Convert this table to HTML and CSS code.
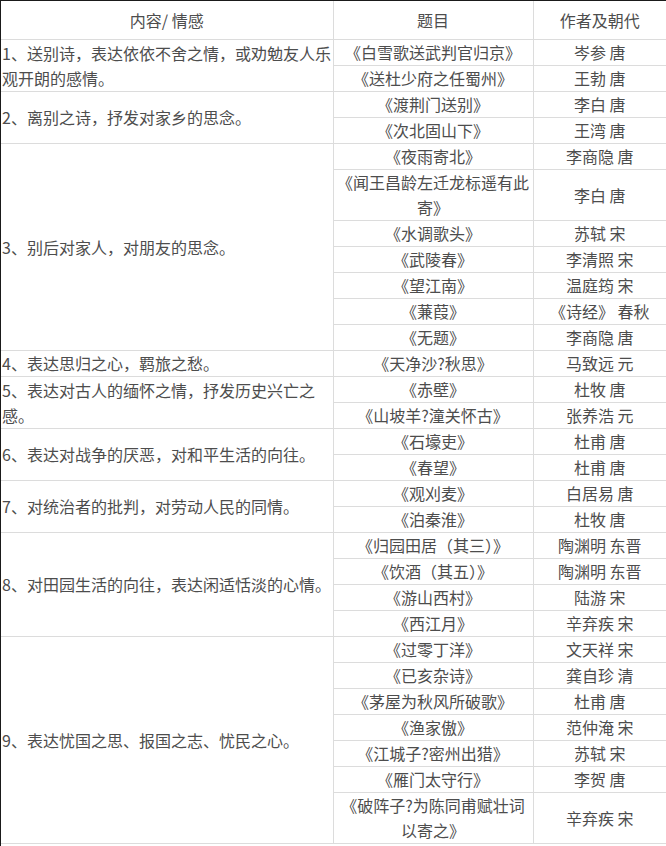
FILE: index.html
```html
<!DOCTYPE html>
<html lang="zh-CN">
<head>
<meta charset="utf-8">
<title>诗歌分类</title>
<link rel="stylesheet" href="styles.css">
</head>
<body>
<div class="frame">
<table class="poems">
<colgroup>
<col class="c-theme">
<col class="c-title">
<col class="c-author">
</colgroup>
<thead>
<tr><th class="theme">内容/ 情感</th><th>题目</th><th>作者及朝代</th></tr>
</thead>
<tbody>
<tr><td class="theme" rowspan="2">1、送别诗，表达依依不舍之情，或劝勉友人乐观开朗的感情。</td><td>《白雪歌送武判官归京》</td><td>岑参 唐</td></tr>
<tr><td>《送杜少府之任蜀州》</td><td>王勃 唐</td></tr>
<tr><td class="theme" rowspan="2">2、离别之诗，抒发对家乡的思念。</td><td>《渡荆门送别》</td><td>李白 唐</td></tr>
<tr><td>《次北固山下》</td><td>王湾 唐</td></tr>
<tr><td class="theme" rowspan="7">3、别后对家人，对朋友的思念。</td><td>《夜雨寄北》</td><td>李商隐 唐</td></tr>
<tr><td>《闻王昌龄左迁龙标遥有此寄》</td><td>李白 唐</td></tr>
<tr><td>《水调歌头》</td><td>苏轼 宋</td></tr>
<tr><td>《武陵春》</td><td>李清照 宋</td></tr>
<tr><td>《望江南》</td><td>温庭筠 宋</td></tr>
<tr><td>《蒹葭》</td><td>《诗经》 春秋</td></tr>
<tr><td>《无题》</td><td>李商隐 唐</td></tr>
<tr><td class="theme">4、表达思归之心，羁旅之愁。</td><td>《天净沙?秋思》</td><td>马致远 元</td></tr>
<tr><td class="theme" rowspan="2">5、表达对古人的缅怀之情，抒发历史兴亡之感。</td><td>《赤壁》</td><td>杜牧 唐</td></tr>
<tr><td>《山坡羊?潼关怀古》</td><td>张养浩 元</td></tr>
<tr><td class="theme" rowspan="2">6、表达对战争的厌恶，对和平生活的向往。</td><td>《石壕吏》</td><td>杜甫 唐</td></tr>
<tr><td>《春望》</td><td>杜甫 唐</td></tr>
<tr><td class="theme" rowspan="2">7、对统治者的批判，对劳动人民的同情。</td><td>《观刈麦》</td><td>白居易 唐</td></tr>
<tr><td>《泊秦淮》</td><td>杜牧 唐</td></tr>
<tr><td class="theme" rowspan="4">8、对田园生活的向往，表达闲适恬淡的心情。</td><td>《归园田居（其三）》</td><td>陶渊明 东晋</td></tr>
<tr><td>《饮酒（其五）》</td><td>陶渊明 东晋</td></tr>
<tr><td>《游山西村》</td><td>陆游 宋</td></tr>
<tr><td>《西江月》</td><td>辛弃疾 宋</td></tr>
<tr><td class="theme" rowspan="7">9、表达忧国之思、报国之志、忧民之心。</td><td>《过零丁洋》</td><td>文天祥 宋</td></tr>
<tr><td>《已亥杂诗》</td><td>龚自珍 清</td></tr>
<tr><td>《茅屋为秋风所破歌》</td><td>杜甫 唐</td></tr>
<tr><td>《渔家傲》</td><td>范仲淹 宋</td></tr>
<tr><td>《江城子?密州出猎》</td><td>苏轼 宋</td></tr>
<tr><td>《雁门太守行》</td><td>李贺 唐</td></tr>
<tr><td>《破阵子?为陈同甫赋壮词以寄之》</td><td>辛弃疾 宋</td></tr>
</tbody>
</table>
</div>
</body>
</html>
```
FILE: styles.css
```css
html, body {
  margin: 0;
  padding: 0;
  background: #ffffff;
}

.frame {
  width: 665px;
  border-top: 1px solid #1a1a1a;
  border-left: 1px solid #1a1a1a;
  height: 845px;
  overflow: hidden;
}

.poems {
  width: 665px;
  table-layout: fixed;
  border-collapse: collapse;
  font-family: "Noto Sans CJK SC", "Noto Sans", sans-serif;
  font-size: 16px;
  line-height: 25px;
  color: #4d4d4d;
}

.c-theme { width: 332px; }
.c-title { width: 200px; }
.c-author { width: 133px; }

.poems th,
.poems td {
  padding: 0;
  text-align: center;
  vertical-align: middle;
  border-bottom: 1px solid #dcdcdc;
  border-left: 1px solid #dcdcdc;
  font-weight: normal;
}

.poems th {
  height: 38px;
  padding-top: 0;
}

.poems th:first-child,
.poems td.theme {
  border-left: none;
}

.poems td.theme {
  text-align: left;
  padding-left: 1px;
}

.poems th.theme {
  text-align: center;
}
```
